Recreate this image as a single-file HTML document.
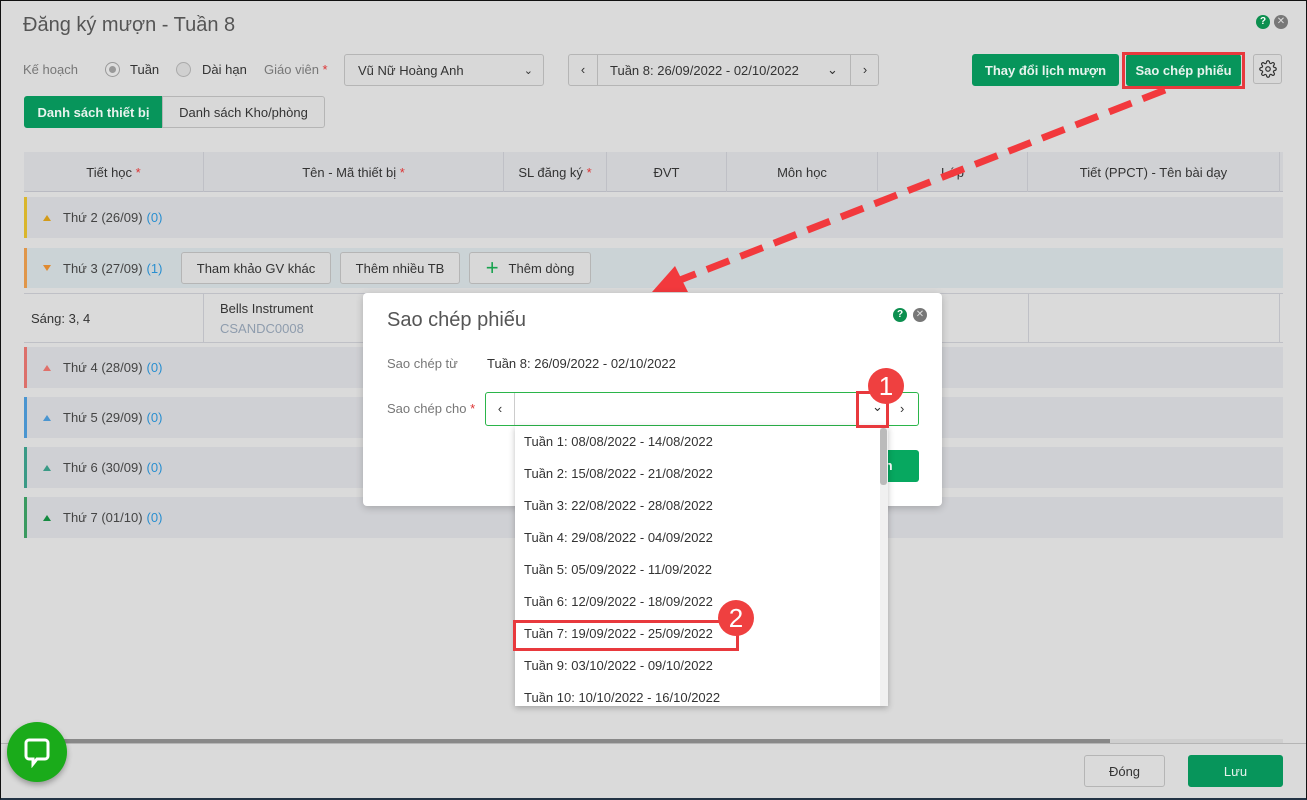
<!DOCTYPE html>
<html><head><meta charset="utf-8"><style>
*{box-sizing:border-box;margin:0;padding:0}
body{width:1307px;height:800px;background:#dadada;font-family:"Liberation Sans",sans-serif;color:#333;position:relative;overflow:hidden;font-size:13px}
.a{position:absolute;white-space:nowrap}
.btn{position:absolute;border:1px solid #b5b5b5;border-radius:3px;background:#d8d8d8;display:flex;align-items:center;justify-content:center;font-size:13px;color:#333;white-space:nowrap}
.g{background:#07955b;color:#e8f3ee;border-color:#07955b;font-weight:bold}
.th{position:absolute;top:152px;height:40px;display:flex;align-items:center;justify-content:center;border-right:1px solid #bfc0c6;font-size:13px;color:#333}
.grp{position:absolute;left:24px;width:1259px;height:41px;background:#cfd0d4;border-left:3px solid;display:flex;align-items:center;padding-left:16px;font-size:13px;color:#444}
.tri{width:0;height:0;border-left:4px solid transparent;border-right:4px solid transparent;margin-right:12px}
.up{border-bottom:6px solid}
.dn{border-top:6px solid}
.n{color:#2a8fd0;margin-left:4px}
.star{color:#d33}
.it{position:absolute;left:524px;font-size:13px;color:#333;white-space:nowrap}
</style></head><body>
<div class="a" style="left:0;top:0;width:1307px;height:800px;border:1px solid #111;border-bottom:2px solid #234;z-index:50;pointer-events:none"></div>
<div class="a" style="left:23px;top:14px;font-size:20px;color:#555">Đăng ký mượn - Tuần 8</div>
<div class="a" style="left:1256px;top:15px;width:14px;height:14px;border-radius:50%;background:#0c8f4f;color:#fff;font-size:10px;font-weight:bold;text-align:center;line-height:14px">?</div>
<div class="a" style="left:1274px;top:15px;width:14px;height:14px;border-radius:50%;background:#777;color:#ddd;font-size:10px;text-align:center;line-height:14px">✕</div>

<div class="a" style="left:23px;top:62px;color:#777">Kế hoạch</div>
<div class="a" style="left:105px;top:62px;width:15px;height:15px;border-radius:50%;border:1px solid #999;background:#ddd"><div style="margin:3px;width:7px;height:7px;border-radius:50%;background:#999"></div></div>
<div class="a" style="left:130px;top:62px">Tuần</div>
<div class="a" style="left:176px;top:62px;width:15px;height:15px;border-radius:50%;border:1px solid #aaa;background:#d0d0d0"></div>
<div class="a" style="left:202px;top:62px">Dài hạn</div>
<div class="a" style="left:264px;top:62px;color:#777">Giáo viên <span class="star">*</span></div>
<div class="btn" style="left:344px;top:54px;width:200px;height:32px;justify-content:flex-start;padding-left:13px">Vũ Nữ Hoàng Anh<span style="position:absolute;right:10px;font-size:11px">⌄</span></div>
<div class="btn" style="left:568px;top:54px;width:311px;height:32px;justify-content:flex-start">
<span style="width:29px;text-align:center;border-right:1px solid #b5b5b5;height:30px;line-height:30px">‹</span>
<span style="margin-left:12px">Tuần 8: 26/09/2022 - 02/10/2022</span>
<span style="position:absolute;left:258px">⌄</span>
<span style="position:absolute;left:281px;width:29px;text-align:center;border-left:1px solid #b5b5b5;height:30px;line-height:30px">›</span></div>
<div class="btn g" style="left:972px;top:54px;width:147px;height:32px">Thay đổi lịch mượn</div>
<div class="btn g" style="left:1126px;top:54px;width:115px;height:32px">Sao chép phiếu</div>
<div class="a" style="left:1122px;top:52px;width:123px;height:37px;border:3px solid #e8393d"></div>
<div class="btn" style="left:1253px;top:54px;width:29px;height:30px">
<svg width="18" height="18" viewBox="0 0 24 24" fill="none" stroke="#333" stroke-width="1.6"><circle cx="12" cy="12" r="3"/><path d="M19.4 15a1.7 1.7 0 0 0 .3 1.8l.1.1a2 2 0 1 1-2.8 2.8l-.1-.1a1.7 1.7 0 0 0-1.8-.3 1.7 1.7 0 0 0-1 1.5V21a2 2 0 1 1-4 0v-.1a1.7 1.7 0 0 0-1.1-1.5 1.7 1.7 0 0 0-1.8.3l-.1.1a2 2 0 1 1-2.8-2.8l.1-.1a1.7 1.7 0 0 0 .3-1.8 1.7 1.7 0 0 0-1.500-1H3a2 2 0 1 1 0-4h.1a1.7 1.7 0 0 0 1.5-1.1 1.7 1.7 0 0 0-.3-1.8l-.1-.1a2 2 0 1 1 2.8-2.8l.1.1a1.7 1.7 0 0 0 1.8.3H9a1.7 1.7 0 0 0 1-1.5V3a2 2 0 1 1 4 0v.1a1.7 1.7 0 0 0 1 1.5 1.7 1.7 0 0 0 1.8-.3l.1-.1a2 2 0 1 1 2.8 2.8l-.1.1a1.7 1.7 0 0 0-.3 1.8V9a1.7 1.7 0 0 0 1.5 1H21a2 2 0 1 1 0 4h-.1a1.7 1.7 0 0 0-1.5 1z"/></svg></div>

<div class="btn g" style="left:24px;top:96px;width:139px;height:32px;border-radius:3px 0 0 3px">Danh sách thiết bị</div>
<div class="btn" style="left:162px;top:96px;width:163px;height:32px;border-radius:0 3px 3px 0">Danh sách Kho/phòng</div>

<div class="a" style="left:24px;top:152px;width:1259px;height:40px;background:#d0d1d4;border-bottom:1px solid #b9bac2"></div>
<div class="th" style="left:24px;width:180px">Tiết học&nbsp;<span class="star">*</span></div>
<div class="th" style="left:204px;width:300px">Tên - Mã thiết bị&nbsp;<span class="star">*</span></div>
<div class="th" style="left:504px;width:103px">SL đăng ký&nbsp;<span class="star">*</span></div>
<div class="th" style="left:607px;width:120px">ĐVT</div>
<div class="th" style="left:727px;width:151px">Môn học</div>
<div class="th" style="left:878px;width:150px">Lớp</div>
<div class="th" style="left:1028px;width:252px">Tiết (PPCT) - Tên bài dạy</div>

<div class="grp" style="top:197px;border-color:#d9b62c"><span class="tri up" style="border-bottom-color:#d39b1a"></span>Thứ 2 (26/09)<span class="n">(0)</span></div>
<div class="grp" style="top:248px;border-color:#e0964a;background:#cbd3d6;height:40px"><span class="tri dn" style="border-top-color:#e08a30"></span>Thứ 3 (27/09)<span class="n">(1)</span></div>
<div class="btn" style="left:181px;top:252px;width:150px;height:32px">Tham khảo GV khác</div>
<div class="btn" style="left:340px;top:252px;width:120px;height:32px">Thêm nhiều TB</div>
<div class="btn" style="left:469px;top:252px;width:122px;height:32px"><span style="color:#18a24e;font-size:22px;margin-right:10px;line-height:1">+</span>Thêm dòng</div>
<div class="a" style="left:24px;top:293px;width:1259px;height:50px;border-top:1px solid #bfc0c6;border-bottom:1px solid #bfc0c6"></div>
<div class="a" style="left:203px;top:293px;height:50px;border-left:1px solid #bfc0c6"></div>
<div class="a" style="left:1028px;top:293px;height:50px;border-left:1px solid #bfc0c6"></div>
<div class="a" style="left:1279px;top:293px;height:50px;border-left:1px solid #bfc0c6"></div>
<div class="a" style="left:31px;top:311px">Sáng: 3, 4</div>
<div class="a" style="left:220px;top:301px">Bells Instrument</div>
<div class="a" style="left:220px;top:321px;color:#8e9cad">CSANDC0008</div>
<div class="grp" style="top:347px;border-color:#dc706b"><span class="tri up" style="border-bottom-color:#e0706a"></span>Thứ 4 (28/09)<span class="n">(0)</span></div>
<div class="grp" style="top:397px;border-color:#4a95d0"><span class="tri up" style="border-bottom-color:#4a95d0"></span>Thứ 5 (29/09)<span class="n">(0)</span></div>
<div class="grp" style="top:447px;border-color:#3a9a86"><span class="tri up" style="border-bottom-color:#3a9a86"></span>Thứ 6 (30/09)<span class="n">(0)</span></div>
<div class="grp" style="top:497px;border-color:#3a9a60"><span class="tri up" style="border-bottom-color:#148a40"></span>Thứ 7 (01/10)<span class="n">(0)</span></div>

<div class="a" style="left:24px;top:739px;width:1086px;height:4px;background:#888"></div>
<div class="a" style="left:1110px;top:739px;width:173px;height:4px;background:#cfcfcf"></div>
<div class="a" style="left:0;top:743px;width:1307px;border-top:1px solid #b5b5b5"></div>
<div class="btn" style="left:1084px;top:755px;width:81px;height:32px;background:#dadada">Đóng</div>
<div class="btn g" style="left:1188px;top:755px;width:95px;height:32px;font-weight:normal">Lưu</div>
<div class="a" style="left:7px;top:722px;width:60px;height:60px;border-radius:50%;background:#1aab1a;box-shadow:0 3px 6px rgba(0,0,0,.3)">
<svg class="a" style="left:17px;top:16px" width="26" height="30" viewBox="0 0 26 30"><path d="M5 2h16a3 3 0 0 1 3 3v13a3 3 0 0 1-3 3h-8l-4 5v-5h-4a3 3 0 0 1-3-3v-13a3 3 0 0 1 3-3z" fill="none" stroke="#fff" stroke-width="3"/></svg></div>

<!-- arrow -->
<svg class="a" style="left:0;top:0;z-index:5" width="1307" height="800"><line x1="1165" y1="90" x2="680" y2="280" stroke="#f2393d" stroke-width="7" stroke-dasharray="24,12"/><polygon points="652,292 675,266 688,292" fill="#f2393d"/></svg>

<!-- modal -->
<div class="a" style="left:363px;top:293px;width:579px;height:213px;background:#fff;border-radius:4px;box-shadow:0 2px 8px rgba(0,0,0,.2);z-index:10">
<div class="a" style="left:24px;top:16px;font-size:20px;color:#555">Sao chép phiếu</div>
<div class="a" style="left:530px;top:15px;width:14px;height:14px;border-radius:50%;background:#0c8f4f;color:#fff;font-size:10px;font-weight:bold;text-align:center;line-height:14px">?</div>
<div class="a" style="left:550px;top:15px;width:14px;height:14px;border-radius:50%;background:#777;color:#ddd;font-size:10px;text-align:center;line-height:14px">✕</div>
<div class="a" style="left:24px;top:63px;color:#777">Sao chép từ</div>
<div class="a" style="left:124px;top:63px">Tuần 8: 26/09/2022 - 02/10/2022</div>
<div class="a" style="left:24px;top:108px;color:#777">Sao chép cho <span class="star">*</span></div>
<div class="a" style="left:122px;top:99px;width:434px;height:34px;border:1px solid #2bb54a;border-radius:3px">
<span class="a" style="left:0;top:0;width:29px;height:32px;border-right:1px solid #ccc;text-align:center;line-height:32px">‹</span>
<span class="a" style="left:386px;top:6px">⌄</span>
<span class="a" style="left:414px;top:0;line-height:32px">›</span></div>
<div class="a" style="left:518px;top:157px;width:38px;height:32px;background:#07a860;border-radius:0 3px 3px 0;color:#fff;font-weight:bold;line-height:32px">in</div>
</div>
<div class="a" style="left:515px;top:426px;width:373px;height:280px;background:#fff;box-shadow:0 2px 6px rgba(0,0,0,.25);z-index:11;overflow:hidden">
<div class="a" style="left:365px;top:0;width:8px;height:280px;background:#f0f0f0"></div>
<div class="a" style="left:365px;top:2px;width:7px;height:57px;background:#bbb;border-radius:3px"></div>
<div class="it" style="left:9px;top:8px">Tuần 1: 08/08/2022 - 14/08/2022</div>
<div class="it" style="left:9px;top:40px">Tuần 2: 15/08/2022 - 21/08/2022</div>
<div class="it" style="left:9px;top:72px">Tuần 3: 22/08/2022 - 28/08/2022</div>
<div class="it" style="left:9px;top:104px">Tuần 4: 29/08/2022 - 04/09/2022</div>
<div class="it" style="left:9px;top:136px">Tuần 5: 05/09/2022 - 11/09/2022</div>
<div class="it" style="left:9px;top:168px">Tuần 6: 12/09/2022 - 18/09/2022</div>
<div class="it" style="left:9px;top:200px">Tuần 7: 19/09/2022 - 25/09/2022</div>
<div class="it" style="left:9px;top:232px">Tuần 9: 03/10/2022 - 09/10/2022</div>
<div class="it" style="left:9px;top:264px">Tuần 10: 10/10/2022 - 16/10/2022</div>
</div>
<div class="a" style="left:513px;top:620px;width:226px;height:31px;border:3px solid #e8393d;z-index:13"></div>
<div class="a" style="left:856px;top:391px;width:33px;height:37px;border:3px solid #e8393d;z-index:13"></div>
<div class="a" style="left:868px;top:368px;width:36px;height:36px;border-radius:50%;background:#ef4040;color:#fff;font-size:26px;text-align:center;line-height:36px;z-index:14">1</div>
<div class="a" style="left:718px;top:600px;width:36px;height:36px;border-radius:50%;background:#ef4040;color:#fff;font-size:26px;text-align:center;line-height:36px;z-index:14">2</div>
</body></html>
